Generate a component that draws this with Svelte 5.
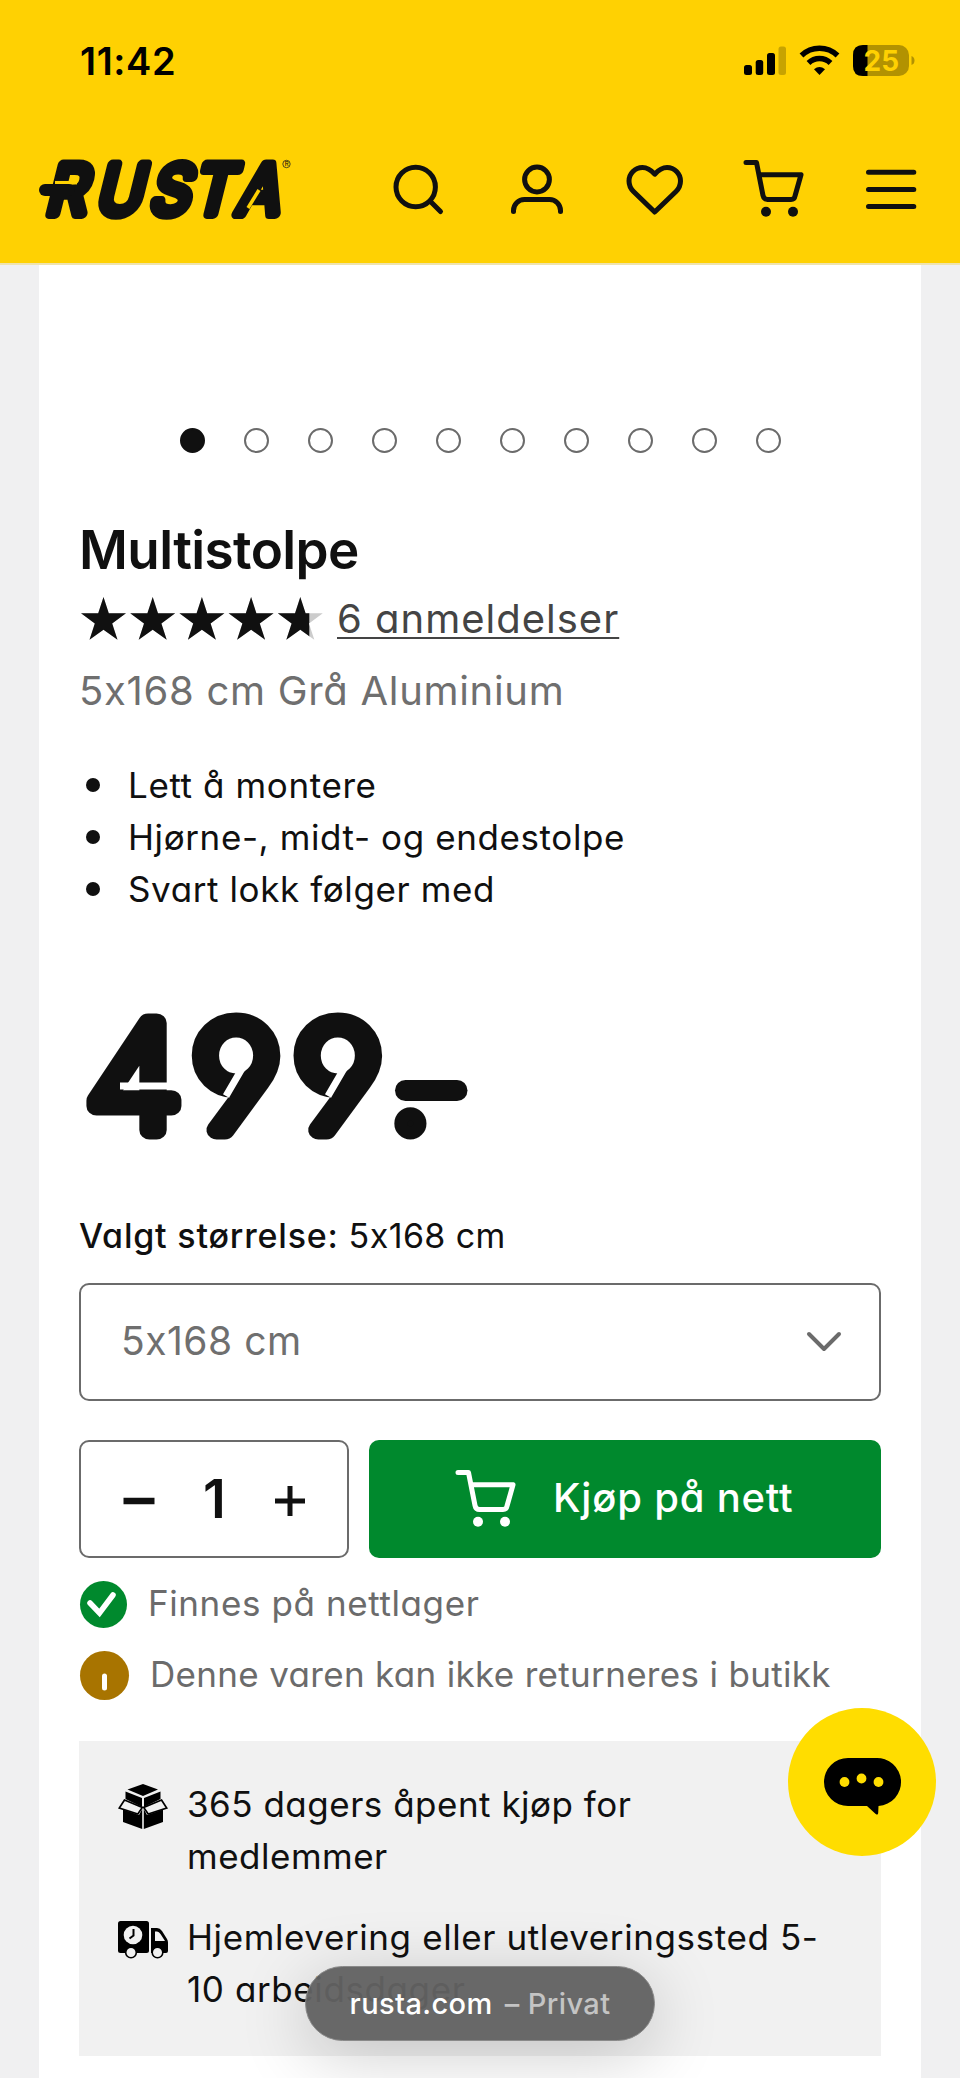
<script lang="ts">
  const slides = 10;
  let activeSlide = $state(0);
  let quantity = $state(1);

  const rating = 4.7;
  const features = ["Lett å montere", "Hjørne-, midt- og endestolpe", "Svart lokk følger med"];
  const size = "5x168 cm";

  function changeQuantity(step: number) {
    quantity = Math.max(1, quantity + step);
  }
</script>

{#snippet cart()}
  <svg class="icon" viewBox="0 0 60 60">
    <path d="M3 2.500h10.500L20 35.500q.8 4 4.500 4h23.500q3.500 0 4-3.500L58 14.700H17" />
    <circle class="wheel" cx="23" cy="51.700" r="5" />
    <circle class="wheel" cx="50" cy="51.700" r="5" />
  </svg>
{/snippet}

<div class="page">
  <header>
    <div class="status-bar">
      <span class="time">11:42</span>
      <svg class="indicators" width="178" height="36" viewBox="0 0 178 36">
        <rect x="2" y="21" width="8" height="10" rx="2.500" />
        <rect x="13.700" y="16" width="7.500" height="15" rx="2.500" />
        <rect x="25" y="9" width="8" height="22" rx="2.500" />
        <rect x="36.500" y="2.500" width="7.500" height="28.500" rx="2.500" opacity=".22" />
        <g fill="none" stroke="#000" stroke-width="5.500">
          <path d="M59.500 11.500a26 26 0 0 1 36 0" />
          <path d="M66.500 19a16 16 0 0 1 22 0" />
        </g>
        <path d="M72 25.300q5.500-4.500 11 0l-5.500 5.700z" />
        <rect x="111" y="1" width="56" height="31" rx="10" opacity=".3" />
        <path d="M125.500 1H121q-10 0-10 10v11q0 10 10 10h4.500z" />
        <path d="M169.500 12q3 1 3 4.500t-3 4.500z" opacity=".3" />
        <text x="121.500" y="26.500">25</text>
      </svg>
    </div>

    <nav>
      <svg class="logo" width="260" height="76" viewBox="0 0 260 76" aria-label="Rusta">
        <g class="wordmark" transform="translate(0 62) skewX(-14) scale(.92 1)">
          <text x="7 61 119.500 166 213.500" y="0">RUSTA</text>
        </g>
        <path class="gap" d="M17 30.700h22" />
        <path class="bar" d="M7 38h24" />
        <path class="gap" d="M210 56l11-18" />
        <circle cx="248.500" cy="12" r="3.700" fill="none" stroke="#222" stroke-width=".8" />
        <text class="mark" x="246.700" y="14.200">R</text>
      </svg>
      <div class="nav-icons">
        <svg class="icon" viewBox="0 0 60 60">
          <circle cx="28.700" cy="27" r="19.700" />
          <path d="M44 42l9.500 9.500" />
        </svg>
        <svg class="icon" viewBox="0 0 60 60">
          <circle cx="31" cy="19.500" r="12.400" />
          <path d="M7.500 51.500v-1a11 11 0 0 1 11-11h25a11 11 0 0 1 11 11v1" />
        </svg>
        <svg class="icon" viewBox="0 0 60 60">
          <path d="M30.700 14.200C27 10 23 7.500 18.500 7.500 11 7.500 5 13.500 5 21c0 4 1.500 7.500 4.500 10.500L30.700 52 52 31.500c3-3 4.500-6.500 4.500-10.500 0-7.500-6-13.500-13.500-13.500-4.500 0-8.500 2.500-12.300 6.700z" />
        </svg>
        {@render cart()}
        <svg class="icon" viewBox="0 0 60 60">
          <path d="M7.500 12.300h45.300M7.500 29.400h45.300M7.500 46.600h45.300" />
        </svg>
      </div>
    </nav>
  </header>

  <main>
    <div class="dots">
      {#each Array(slides) as _, i}
        <button
          class="dot"
          class:active={i === activeSlide}
          aria-label={`Bilde ${i + 1}`}
          onclick={() => (activeSlide = i)}
        ></button>
      {/each}
    </div>

    <h1>Multistolpe</h1>

    <div class="rating">
      <svg width="245" height="46" viewBox="0 0 245 46">
        <defs>
          <clipPath id="filled"><rect width={rating * 49 - 1} height="46" /></clipPath>
          <g id="stars">
            {#each Array(5) as _, i}
              <path
                transform={`translate(${i * 49.200} 0)`}
                d="M23.500 1l5.300 16.300H46L32.200 27.600l5.300 16.200-14-10-14 10 5.300-16.200L1 17.300h17.200z"
              />
            {/each}
          </g>
        </defs>
        <use href="#stars" fill="#ccc" />
        <use href="#stars" fill="#101010" clip-path="url(#filled)" />
      </svg>
      <a href="#reviews">6 anmeldelser</a>
    </div>

    <p class="subtitle">5x168 cm Grå Aluminium</p>

    <ul class="features">
      {#each features as feature}
        <li>{feature}</li>
      {/each}
    </ul>

    <svg class="price" width="400" height="140" viewBox="0 0 400 140">
      <g transform="translate(0 122.500) scale(1.070 1)">
        <text x="5.300 104 199" y="0">499</text>
      </g>
      <path class="cut" d="M40 79h48" />
      <path class="cut" d="M146 89l17.500-30M248 89l17.500-30" />
      <text class="point" x="330.500" y="122">.</text>
      <path class="dash" d="M325.500 83.500H377" />
    </svg>

    <p class="chosen"><b>Valgt størrelse:</b> {size}</p>

    <button class="select">
      <span>{size}</span>
      <svg width="38" height="24" viewBox="0 0 38 24">
        <path d="M4 4l15 15L34 4" />
      </svg>
    </button>

    <div class="buy-row">
      <div class="quantity">
        <button aria-label="Mindre" onclick={() => changeQuantity(-1)}>
          <svg width="32" height="32" viewBox="0 0 32 32"><path d="M.5 16h31" stroke-width="6.500" /></svg>
        </button>
        <span>{quantity}</span>
        <button aria-label="Mer" onclick={() => changeQuantity(1)}>
          <svg width="32" height="32" viewBox="0 0 32 32"><path d="M1 16h30M16 1v30" stroke-width="5" /></svg>
        </button>
      </div>
      <button class="buy">
        {@render cart()}
        <span>Kjøp på nett</span>
      </button>
    </div>

    <div class="stock">
      <svg width="47" height="47" viewBox="0 0 47 47">
        <circle cx="23.500" cy="23.500" r="23.500" fill="#00892d" />
        <path d="M10 22l9.500 10L33 14" fill="none" stroke="#fff" stroke-width="5.500" stroke-linecap="round" />
      </svg>
      <span>Finnes på nettlager</span>
    </div>
    <div class="stock notice">
      <svg width="49" height="49" viewBox="0 0 49 49">
        <circle cx="24.500" cy="24.500" r="24.500" fill="#a87400" />
        <path d="M24.500 25v12" stroke="#fff" stroke-width="5" stroke-linecap="round" />
      </svg>
      <span>Denne varen kan ikke returneres i butikk</span>
    </div>

    <section class="benefits">
      <div class="benefit">
        <svg width="50" height="46" viewBox="0 0 50 46">
          <path d="M25 0l15 5.500L25 12 9.500 5.500z" />
          <path d="M7.500 7.500L24 14v9L7.500 15zM42.500 7.500L26 14v9l16.500-8z" />
          <path d="M5 25.500l16 5.500 3.200-6V45L5 38zM45 25.500L29 31l-3.200-6V45L45 38z" />
          <path d="M6.500 16L1.300 24l18.500 6 4.500-6.500zM43.500 16l5.200 8-18.500 6-4.500-6.500z" fill="#f1f1f1" stroke="#000" stroke-width="1.700" />
        </svg>
        <p>365 dagers åpent kjøp for medlemmer</p>
      </div>
      <div class="benefit delivery">
        <svg width="50" height="38" viewBox="0 0 50 38">
          <rect width="31" height="32" rx="2.500" />
          <path d="M33 7h6q3 0 5 3l5 8q1 1.500 1 3.500V30q0 2-2 2H33z" />
          <circle cx="15" cy="14" r="9.300" fill="#f1f1f1" />
          <path d="M15.500 8v6.500l-4 3" fill="none" stroke="#000" stroke-width="2" />
          <path d="M37 10.500h2q2 0 3.500 2.500l4.500 7H37z" fill="#f1f1f1" />
          <g fill="#f1f1f1" stroke="#000" stroke-width="1.600">
            <circle cx="13" cy="31.500" r="5.300" />
            <circle cx="39.500" cy="31.500" r="5.300" />
          </g>
        </svg>
        <p>Hjemlevering eller utleveringssted 5-<br />10 arbeidsdager</p>
      </div>
    </section>
  </main>

  <button class="chat" aria-label="Chat">
    <svg width="76" height="60" viewBox="0 0 76 60">
      <path d="M24 1h27.500a24 24 0 0 1 3 48l-.3 7q-.2 2.500-2.500 1L43 49H24A24 24 0 0 1 24 1z" />
      <g fill="#fd0">
        <circle cx="20.500" cy="25" r="4.900" />
        <circle cx="37.500" cy="21.500" r="4.900" />
        <circle cx="54.500" cy="25" r="4.900" />
      </g>
    </svg>
  </button>

  <div class="address-pill">
    <span class="domain">rusta.com</span>
    <span class="mode">– Privat</span>
  </div>
</div>

<style>
  :global(body) {
    background: #f0f0f1;
  }

  .page {
    position: relative;
    width: 960px;
    height: 2078px;
    overflow: hidden;
    background: #f0f0f1;
    color: #101010;
    font-family: Inter, "Liberation Sans", sans-serif;
    font-size: 35px;
    /* single-storey a, and no x -> × between digits */
    font-feature-settings: "cv11", "calt" 0;
  }

  button {
    padding: 0;
    border: 0;
    background: none;
    color: inherit;
    font: inherit;
    font-feature-settings: inherit;
    cursor: pointer;
  }

  svg {
    display: block;
    flex: none;
    overflow: visible;
  }

  h1,
  p,
  ul {
    margin: 0;
  }

  header {
    box-sizing: border-box;
    height: 265px;
    background: #ffd102;
    border-bottom: 2px solid #efe3ae;
  }

  .status-bar {
    display: flex;
    align-items: center;
    justify-content: space-between;
    height: 123px;
    padding: 0 40px 0 80px;
    color: #000;
    font-feature-settings: normal;
  }

  .time {
    margin-bottom: 2px;
    font-size: 38px;
    font-weight: 600;
    letter-spacing: 0.6px;
  }

  .indicators text {
    fill: #ffd102;
    font-size: 28px;
    font-weight: 700;
  }

  nav {
    display: flex;
    align-items: center;
    justify-content: space-between;
    height: 134px;
    padding: 0 39px 0 38px;
  }

  .wordmark text {
    font-size: 68px;
    font-weight: 400;
    fill: #101010;
    stroke: #101010;
    stroke-width: 10px;
    stroke-linejoin: round;
  }

  .gap {
    stroke: #ffd102;
    stroke-width: 3.5;
  }

  .bar {
    stroke: #101010;
    stroke-width: 12;
    stroke-linecap: round;
  }

  .mark {
    font-size: 6px;
  }

  .nav-icons {
    display: flex;
    gap: 58.5px;
  }

  .icon {
    width: 60px;
    height: 60px;
    fill: none;
    stroke: currentColor;
    stroke-width: 5;
    stroke-linecap: round;
    stroke-linejoin: round;
  }

  .wheel {
    fill: currentColor;
    stroke: none;
  }

  main {
    box-sizing: border-box;
    height: 1813px;
    margin: 0 39px;
    padding: 163px 40px 0;
    background: #fff;
  }

  .dots {
    display: flex;
    justify-content: center;
    gap: 39px;
    height: 25px;
  }

  .dot {
    box-sizing: border-box;
    width: 25px;
    height: 25px;
    border: 2px solid #6b6b6b;
    border-radius: 50%;
  }

  .dot.active {
    background: #101010;
    border-color: #101010;
  }

  h1 {
    margin-top: 65px;
    font-size: 53px;
    font-weight: 600;
    line-height: 64px;
    letter-spacing: -0.6px;
  }

  .rating {
    display: flex;
    gap: 12px;
    margin-top: 14px;
    margin-left: 1px;
    height: 46px;
  }

  .rating a {
    color: #444;
    font-size: 40px;
    line-height: 46px;
    letter-spacing: 1px;
    text-decoration-thickness: 2px;
    text-underline-offset: 4px;
  }

  .subtitle {
    margin-top: 24px;
    color: #6f6f6f;
    font-size: 40px;
    line-height: 50px;
    letter-spacing: 0.7px;
  }

  .features {
    margin-top: 43px;
    padding: 0;
    list-style: none;
    font-size: 35px;
    line-height: 52px;
    letter-spacing: 0.6px;
  }

  .features li {
    display: flex;
    align-items: center;
    gap: 28px;
    padding-left: 7px;
  }

  .features li::before {
    content: "";
    width: 14px;
    height: 14px;
    border-radius: 50%;
    background: #101010;
  }

  .price {
    margin-top: 92px;
    margin-left: 1px;
  }

  .price text {
    fill: #101010;
    stroke: #101010;
    stroke-width: 19px;
    stroke-linejoin: round;
    font-size: 147px;
    font-weight: 200;
    font-feature-settings: "cv04";
  }

  .price .point {
    font-size: 100px;
    font-weight: 400;
    text-anchor: middle;
  }

  .price .dash {
    stroke: #101010;
    stroke-width: 21;
    stroke-linecap: round;
  }

  .price .cut {
    stroke: #fff;
    stroke-width: 7;
  }

  .chosen {
    margin-top: 64px;
    font-size: 34px;
    line-height: 50px;
    letter-spacing: 0.4px;
  }

  .chosen b {
    font-weight: 500;
    letter-spacing: 0.8px;
  }

  .select {
    box-sizing: border-box;
    display: flex;
    align-items: center;
    justify-content: space-between;
    width: 802px;
    height: 118px;
    margin-top: 22px;
    padding: 0 36px 0 40px;
    border: 2px solid #6b6b6b;
    border-radius: 10px;
    color: #6f6f6f;
    font-size: 39px;
    letter-spacing: 0.5px;
  }

  .select span {
    margin-bottom: 4px;
  }

  .select path {
    fill: none;
    stroke: #6b6b6b;
    stroke-width: 4;
    stroke-linecap: round;
    stroke-linejoin: round;
  }

  .buy-row {
    display: flex;
    gap: 20px;
    width: 802px;
    height: 118px;
    margin-top: 39px;
  }

  .quantity {
    box-sizing: border-box;
    display: flex;
    align-items: center;
    justify-content: space-between;
    width: 270px;
    padding: 4px 41px 0 42px;
    border: 2px solid #6b6b6b;
    border-radius: 10px;
  }

  .quantity path {
    stroke: #101010;
  }

  .quantity span {
    margin-bottom: 6px;
    font-size: 54px;
    font-weight: 600;
  }

  .buy {
    display: flex;
    align-items: center;
    gap: 38px;
    width: 512px;
    padding: 2px 0 0 86px;
    border-radius: 10px;
    background: #00892d;
    color: #fff;
    font-size: 40px;
    font-weight: 500;
    letter-spacing: 0.8px;
  }

  .buy span {
    margin-bottom: 6px;
  }

  .stock {
    display: flex;
    align-items: center;
    gap: 21px;
    height: 47px;
    margin-top: 23px;
    padding-left: 1px;
    color: #6b6b6b;
    letter-spacing: 0.6px;
    white-space: nowrap;
  }

  .stock span {
    margin-bottom: 3px;
  }

  .stock.notice {
    height: 49px;
    letter-spacing: 0.32px;
  }

  .benefits {
    box-sizing: border-box;
    display: flex;
    flex-direction: column;
    gap: 30px;
    width: 802px;
    height: 315px;
    margin-top: 41px;
    padding: 38px 39px 0;
    background: #f1f1f1;
  }

  .benefit {
    display: flex;
    gap: 19px;
    line-height: 51.5px;
    letter-spacing: 0.5px;
  }

  .benefit svg {
    margin-top: 5px;
  }

  .benefit p {
    width: 650px;
  }

  .benefit:first-child p {
    width: 500px;
  }

  .delivery {
    letter-spacing: 0.6px;
  }

  .delivery svg {
    margin-top: 9px;
  }

  .chat {
    position: absolute;
    left: 787.5px;
    top: 1708px;
    display: flex;
    justify-content: center;
    align-items: center;
    width: 148px;
    height: 148px;
    border-radius: 50%;
    background: #fd0;
  }

  .chat svg {
    margin-top: 10px;
  }

  .address-pill {
    position: absolute;
    left: 305px;
    top: 1966px;
    box-sizing: border-box;
    display: flex;
    align-items: center;
    justify-content: center;
    gap: 12px;
    width: 350px;
    height: 75px;
    border: 1px solid #8a8a8a;
    border-radius: 38px;
    background: rgba(98, 98, 98, 0.96);
    box-shadow: 0 14px 70px rgba(0, 0, 0, 0.2);
    color: #fff;
    font-size: 29px;
    font-weight: 500;
    font-feature-settings: normal;
    letter-spacing: 0.4px;
  }

  .mode {
    color: #c4c4c4;
  }
</style>
